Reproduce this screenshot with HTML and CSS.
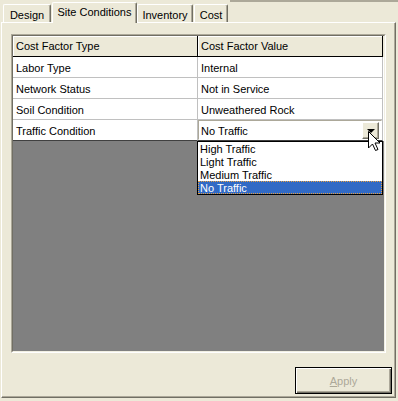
FILE: index.html
```html
<!DOCTYPE html>
<html lang="en">
<head>
    <meta charset="UTF-8">
    <title>Site Conditions</title>
    <link rel="stylesheet" href="styles.css">
</head>
<body>
    <div class="topline"></div>
    <div class="tabs">
        <div class="tab tab-design">Design</div>
        <div class="tab tab-site active">Site Conditions</div>
        <div class="tab tab-inventory">Inventory</div>
        <div class="tab tab-cost">Cost</div>
    </div>
    <div class="panel">
        <div class="grid-outer">
            <div class="grid">
                <div class="row header">
                    <div class="cell">Cost Factor Type</div>
                    <div class="cell">Cost Factor Value</div>
                </div>
                <div class="row">
                    <div class="cell">Labor Type</div>
                    <div class="cell">Internal</div>
                </div>
                <div class="row">
                    <div class="cell">Network Status</div>
                    <div class="cell">Not in Service</div>
                </div>
                <div class="row">
                    <div class="cell">Soil Condition</div>
                    <div class="cell">Unweathered Rock</div>
                </div>
                <div class="row last">
                    <div class="cell">Traffic Condition</div>
                    <div class="cell combo-cell">
                        <div class="combo">
                            <span class="combo-text">No Traffic</span>
                            <span class="combo-btn"><span class="arrow"></span></span>
                        </div>
                    </div>
                </div>

                <ul class="droplist">
                    <li>High Traffic</li>
                    <li>Light Traffic</li>
                    <li>Medium Traffic</li>
                    <li class="selected">No Traffic</li>
                </ul>

                <!-- mouse pointer over the drop button -->
                <svg class="cursor" width="13" height="21" viewBox="0 0 13 21">
                    <path d="M0.5 0.5 L0.5 17 L4.5 13 L7.5 19.5 L10 18.5 L7 12 L12 12 Z" fill="#fff" stroke="#000" stroke-width="1"/>
                </svg>
            </div>
        </div>
        <div class="footer">
            <button class="apply" disabled><u>A</u>pply</button>
        </div>
    </div>
</body>
</html>
```

FILE: styles.css
```css
body {
    margin: 0;
    width: 398px;
    height: 401px;
    background: #ECE9D8;
    font-family: "Liberation Sans", Arial, sans-serif;
    font-size: 11px;
    color: #000;
    position: relative;
    overflow: hidden;
}
.topline {
    position: absolute;
    top: 0;
    left: 230px;
    right: 0;
    height: 2px;
    background: #aca899;
}
.tabs {
    display: flex;
    align-items: flex-end;
    height: 22px;
    padding-left: 3px;
    position: relative;
    z-index: 2;
}
.tab {
    box-sizing: border-box;
    height: 18px;
    padding: 4px 0 0 0;
    border-top: 1px solid #fff;
    border-left: 1px solid #fff;
    border-right: 1px solid #716f64;
    box-shadow: inset -1px 0 #aca899;
    border-radius: 2px 2px 0 0;
    text-align: center;
    background: #ECE9D8;
}
.tab-design { width: 48px; }
.tab-site { width: 85px; margin-left: 1px; }
.tab-inventory { width: 56px; }
.tab-cost { width: 34px; margin-left: 1px; }
.tab.active {
    height: 21px;
    margin-bottom: -1px;
    padding-top: 3px;
}
.panel {
    box-sizing: border-box;
    margin-left: 1px;
    width: 395px;
    height: 376px;
    border-top: 1px solid #fff;
    border-left: 1px solid #fff;
    border-right: 1px solid #716f64;
    border-bottom: 1px solid #716f64;
    box-shadow: inset -1px -1px #aca899;
    padding: 11px 9px 0 9px;
    display: flex;
    flex-direction: column;
}
.grid-outer {
    height: 319px;
    box-sizing: border-box;
    border: 1px solid;
    border-color: #aca899 #fff #fff #aca899;
}
.grid {
    height: 100%;
    box-sizing: border-box;
    border: 1px solid;
    border-color: #716f64 #f1efe2 #f1efe2 #716f64;
    background: #808080;
    position: relative;
}
.row {
    display: grid;
    grid-template-columns: 185px 185px;
    height: 21px;
    background: #fff;
}
.cell {
    box-sizing: border-box;
    padding: 5px 0 0 3px;
    border-bottom: 1px solid #c0c0c0;
    border-right: 1px solid #c0c0c0;
    white-space: nowrap;
}
.row.last .cell {
    border-bottom-color: #404040;
}
.row.header {
    background: #ECE9D8;
}
.row.header .cell {
    padding-top: 4px;
    border-bottom-color: #000;
    border-right-color: #000;
    box-shadow: inset 1px 1px #fff;
}
.combo-cell {
    padding: 0;
}
.combo {
    box-sizing: border-box;
    height: 20px;
    border: 1px solid;
    border-color: #aca899 #fff #fff #aca899;
    display: flex;
    align-items: center;
    justify-content: space-between;
    padding-left: 2px;
    padding-top: 1px;
}
.combo-btn {
    box-sizing: border-box;
    width: 17px;
    height: 17px;
    margin-right: 2px;
    background: #ECE9D8;
    border: 1px solid;
    border-color: #fff #716f64 #716f64 #fff;
    box-shadow: inset -1px -1px #aca899;
    display: flex;
    align-items: center;
    justify-content: center;
}
.arrow {
    width: 0;
    height: 0;
    border-left: 4px solid transparent;
    border-right: 4px solid transparent;
    border-top: 4px solid #000;
}
.droplist {
    position: absolute;
    left: 184px;
    top: 105px;
    width: 186px;
    box-sizing: border-box;
    margin: 0;
    padding: 0;
    list-style: none;
    background: #fff;
    border: 1px solid #000;
}
.droplist li {
    box-sizing: border-box;
    height: 13px;
    line-height: 14px;
    padding-left: 2px;
}
.droplist li.selected {
    background: #316AC5;
    color: #fff;
    outline: 1px dotted #e8a040;
    outline-offset: -1px;
}
.cursor {
    position: absolute;
    left: 355px;
    top: 95px;
}
.footer {
    display: flex;
    justify-content: flex-end;
    margin-top: 14px;
    margin-right: -6px;
}
.apply {
    width: 97px;
    height: 27px;
    border: 1px solid #000;
    background: #ECE9D8;
    box-shadow: inset 1px 1px #fff, inset -1px -1px #716f64, inset -2px -2px #aca899;
    font-family: "Liberation Sans", Arial, sans-serif;
    font-size: 11px;
    color: #aca899;
    padding: 0;
}
```
